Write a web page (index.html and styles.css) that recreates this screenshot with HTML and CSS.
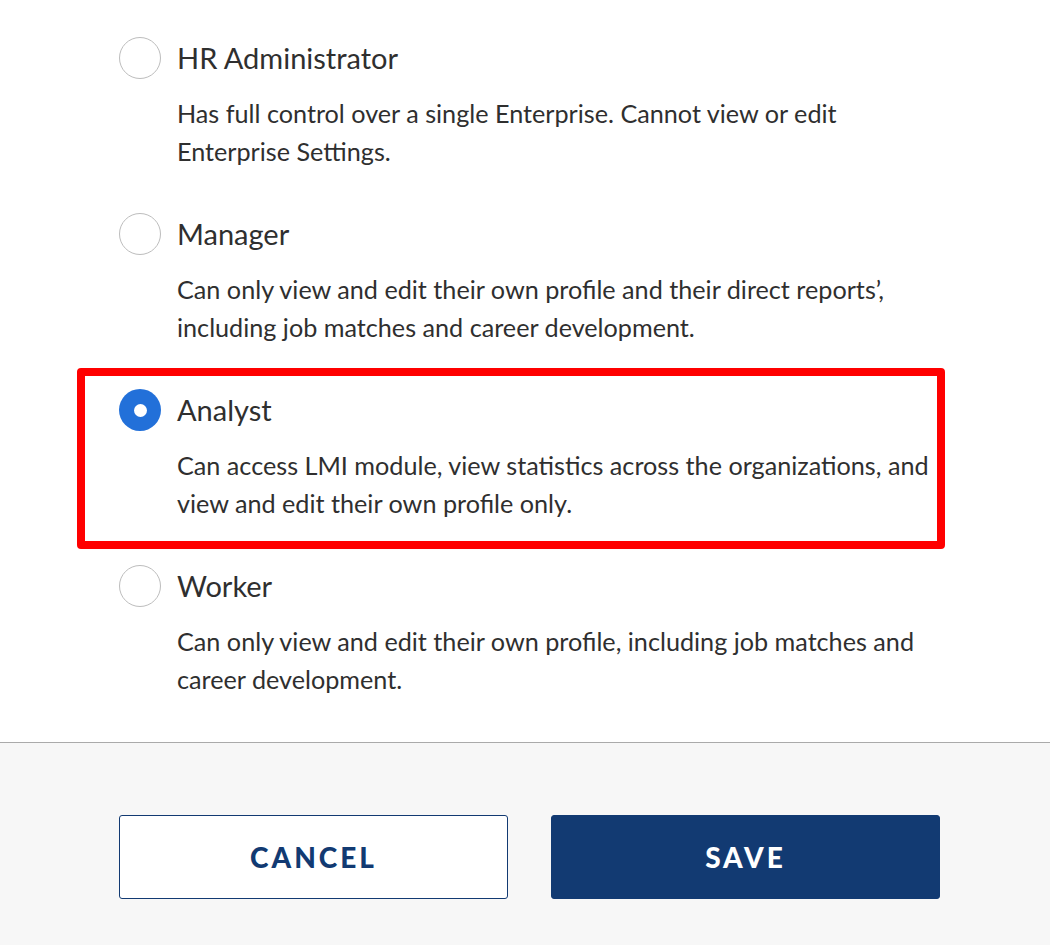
FILE: index.html
```html
<!DOCTYPE html>
<html lang="en">
<head>
<meta charset="utf-8">
<title>Role</title>
<link rel="stylesheet" href="styles.css">
</head>
<body>
<div class="page">
  <div class="options">
    <div class="option">
      <div class="option-head">
        <span class="radio"></span>
        <span class="option-title">HR Administrator</span>
      </div>
      <p class="option-desc">Has full control over a single Enterprise. Cannot view or edit Enterprise Settings.</p>
    </div>
    <div class="option">
      <div class="option-head">
        <span class="radio"></span>
        <span class="option-title">Manager</span>
      </div>
      <p class="option-desc">Can only view and edit their own profile and their direct reports’, including job matches and career development.</p>
    </div>
    <div class="option option-selected">
      <div class="option-head">
        <span class="radio radio-checked"></span>
        <span class="option-title">Analyst</span>
      </div>
      <p class="option-desc">Can access LMI module, view statistics across the organizations, and view and edit their own profile only.</p>
    </div>
    <div class="option">
      <div class="option-head">
        <span class="radio"></span>
        <span class="option-title">Worker</span>
      </div>
      <p class="option-desc">Can only view and edit their own profile, including job matches and career development.</p>
    </div>
  </div>
  <div class="footer">
    <button class="btn btn-outline">CANCEL</button>
    <button class="btn btn-primary">SAVE</button>
  </div>
</div>
</body>
</html>
```

FILE: styles.css
```css
html, body {
  margin: 0;
  padding: 0;
  background: #ffffff;
}
body {
  font-family: Lato, "Liberation Sans", sans-serif;
  color: #333333;
}
.page {
  width: 1050px;
  min-height: 945px;
  display: flex;
  flex-direction: column;
}
.options {
  padding: 37px 110px 44px 119px;
  display: flex;
  flex-direction: column;
  gap: 43px;
  border-bottom: 1px solid #aaaaaa;
}
.option {
  position: relative;
}
.option-head {
  display: flex;
  align-items: center;
  gap: 16px;
  height: 42px;
}
.radio {
  box-sizing: border-box;
  width: 42px;
  height: 42px;
  border-radius: 50%;
  border: 1px solid #bdbdbd;
  background: #ffffff;
  flex: none;
  display: flex;
  align-items: center;
  justify-content: center;
}
.radio-checked {
  border: none;
  background: #2270d9;
}
.radio-checked::after {
  content: "";
  width: 13px;
  height: 13px;
  border-radius: 50%;
  background: #ffffff;
}
.option-title {
  font-size: 29px;
  line-height: 42px;
  color: #2f2f2f;
}
.option-desc {
  margin: 15px 0 0 58px;
  font-size: 25.2px;
  line-height: 38px;
  color: #2f2f2f;
}
.option-selected::after {
  content: "";
  position: absolute;
  top: -21px;
  left: -42px;
  right: -5px;
  bottom: -27px;
  border: 8px solid #ff0000;
  border-radius: 4px;
  pointer-events: none;
}
.footer {
  flex: 1;
  background: #f7f7f7;
  padding: 72px 110px 46px 119px;
  display: flex;
  gap: 43px;
  align-items: flex-start;
}
.btn {
  box-sizing: border-box;
  width: 389px;
  height: 84px;
  border-radius: 3px;
  font-family: Lato, "Liberation Sans", sans-serif;
  font-size: 28px;
  font-weight: 900;
  letter-spacing: 3px;
  cursor: pointer;
}
.btn-outline {
  background: #ffffff;
  border: 1px solid #123a72;
  color: #123a72;
}
.btn-primary {
  background: #123a72;
  border: 1px solid #123a72;
  color: #ffffff;
}
```
